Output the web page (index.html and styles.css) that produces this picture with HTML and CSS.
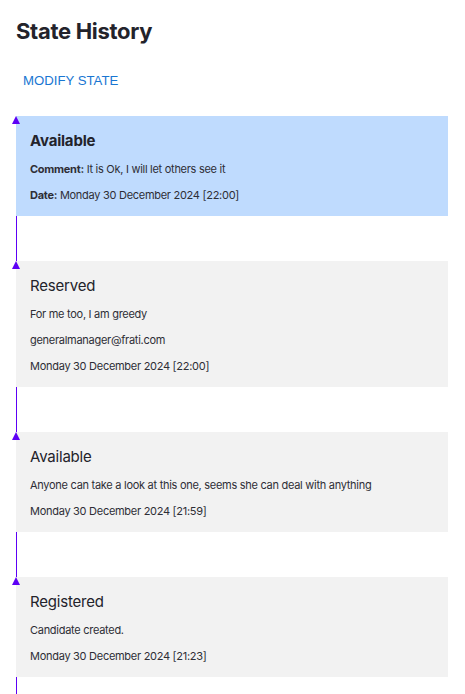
FILE: index.html
```html
<!DOCTYPE html>
<html lang="en">
<head>
<meta charset="utf-8">
<title>State History</title>
<link rel="stylesheet" href="styles.css">
</head>
<body>
<main class="page">
  <h1 class="title">State History</h1>
  <div class="actions">
    <button class="modify" type="button">MODIFY STATE</button>
  </div>
  <ul class="timeline">
    <li class="entry">
      <span class="marker"></span>
      <div class="card card-current">
        <h2 class="state state-bold">Available</h2>
        <p class="line"><strong>Comment:</strong> It is Ok, I will let others see it</p>
        <p class="line"><strong>Date:</strong> Monday 30 December 2024 [22:00]</p>
      </div>
      <div class="connector"></div>
    </li>
    <li class="entry">
      <span class="marker"></span>
      <div class="card">
        <h2 class="state">Reserved</h2>
        <p class="line">For me too, I am greedy</p>
        <p class="line">generalmanager@frati.com</p>
        <p class="line">Monday 30 December 2024 [22:00]</p>
      </div>
      <div class="connector"></div>
    </li>
    <li class="entry">
      <span class="marker"></span>
      <div class="card">
        <h2 class="state">Available</h2>
        <p class="line">Anyone can take a look at this one, seems she can deal with anything</p>
        <p class="line">Monday 30 December 2024 [21:59]</p>
      </div>
      <div class="connector"></div>
    </li>
    <li class="entry">
      <span class="marker"></span>
      <div class="card">
        <h2 class="state">Registered</h2>
        <p class="line">Candidate created.</p>
        <p class="line">Monday 30 December 2024 [21:23]</p>
      </div>
      <div class="connector"></div>
    </li>
  </ul>
</main>
</body>
</html>
```

FILE: styles.css
```css
* { box-sizing: border-box; }

html, body {
  margin: 0;
  padding: 0;
  background: #ffffff;
}

body {
  font-family: Inter, "Noto Sans", sans-serif;
  color: #2a2a33;
}

.page {
  padding: 16px 17px 0 16px;
}

.title {
  margin: 0;
  font-size: 22px;
  line-height: 30px;
  font-weight: 700;
  letter-spacing: -0.3px;
  color: #23232b;
}

.actions {
  margin-top: 17px;
}

.modify {
  font-family: "Liberation Sans", Arial, sans-serif;
  font-size: 13.2px;
  font-weight: 400;
  letter-spacing: 0;
  color: #1976d2;
  background: transparent;
  border: 0;
  padding: 6px 7px;
  line-height: 24px;
  cursor: pointer;
}

.timeline {
  list-style: none;
  margin: 17px 0 0 0;
  padding: 0;
}

.entry {
  position: relative;
}

.marker {
  position: absolute;
  left: -4px;
  top: 0;
  width: 0;
  height: 0;
  border-left: 4px solid transparent;
  border-right: 4px solid transparent;
  border-bottom: 8px solid #5d00f5;
}

.card {
  background: #f2f2f2;
  padding: 14px 14px 12px 14px;
}

.card-current {
  background: #bfdbfe;
}

.state {
  margin: 0;
  font-size: 15px;
  line-height: 22px;
  font-weight: 400;
  letter-spacing: -0.2px;
  color: #23232b;
}

.state-bold {
  font-weight: 700;
}

.line {
  margin: 8px 0 0 0;
  font-size: 11px;
  line-height: 18px;
  letter-spacing: -0.28px;
  color: #2e2e36;
}

.line strong {
  font-weight: 700;
}

.connector {
  height: 45px;
  border-left: 1px solid #5d00f5;
}
```
